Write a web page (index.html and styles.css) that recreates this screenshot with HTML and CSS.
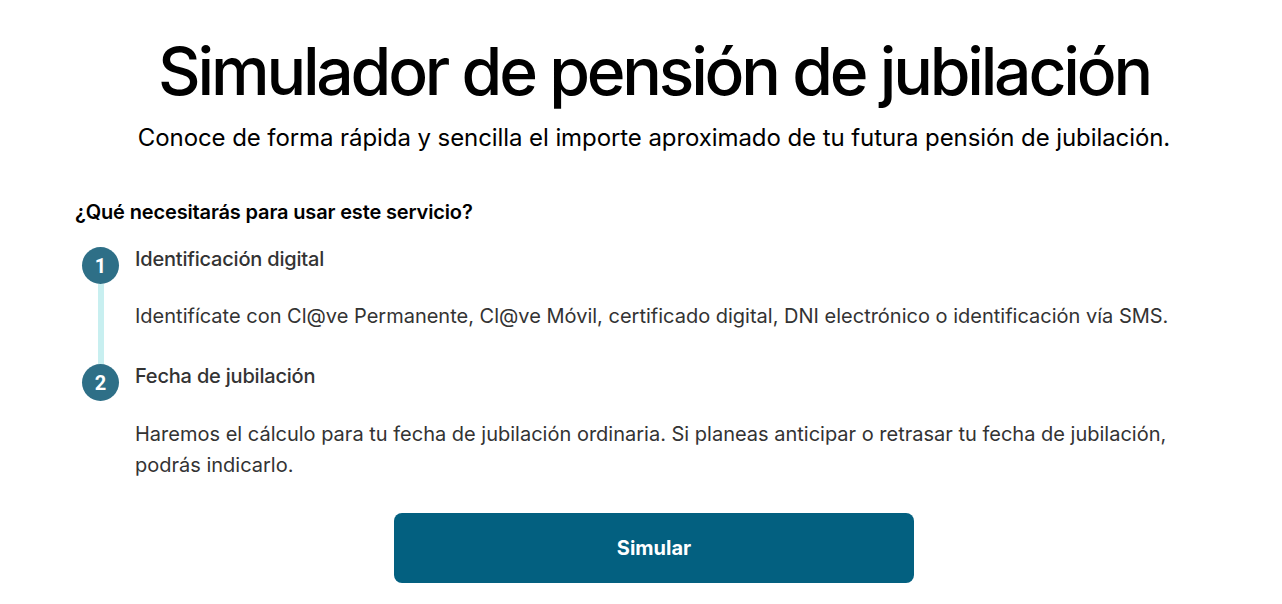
FILE: index.html
```html
<!DOCTYPE html>
<html lang="es">
<head>
<meta charset="utf-8">
<title>Simulador de pensión de jubilación</title>
<link rel="stylesheet" href="styles.css">
</head>
<body>
<main class="page">
  <header class="hero">
    <h1 class="hero-title">Simulador de pensión de jubilación</h1>
    <p class="hero-sub">Conoce de forma rápida y sencilla el importe aproximado de tu futura pensión de jubilación.</p>
  </header>
  <section class="needs">
    <h2 class="needs-title">¿Qué necesitarás para usar este servicio?</h2>
    <ol class="steps">
      <li class="step">
        <div class="step-rail">
          <span class="step-num">1</span>
          <span class="step-line"></span>
        </div>
        <div class="step-body">
          <h3 class="step-title">Identificación digital</h3>
          <p class="step-text">Identifícate con Cl@ve Permanente, Cl@ve Móvil, certificado digital, DNI electrónico o identificación vía SMS.</p>
        </div>
      </li>
      <li class="step step-last">
        <div class="step-rail">
          <span class="step-num">2</span>
        </div>
        <div class="step-body">
          <h3 class="step-title">Fecha de jubilación</h3>
          <p class="step-text">Haremos el cálculo para tu fecha de jubilación ordinaria. Si planeas anticipar o retrasar tu fecha de jubilación, podrás indicarlo.</p>
        </div>
      </li>
    </ol>
  </section>
  <div class="actions">
    <button class="btn-primary" type="button">Simular</button>
  </div>
</main>
</body>
</html>
```
FILE: styles.css
```css
* { box-sizing: border-box; }
html, body { margin: 0; padding: 0; background: #fff; }
body {
  font-family: Inter, "Noto Sans", sans-serif;
  color: #000;
}
.page {
  width: 1158px;
  margin-left: 75px;
  padding-top: 31px;
}
.hero { text-align: center; }
.hero-title {
  margin: 0;
  font-size: 66px;
  font-weight: 500;
  line-height: 80px;
  letter-spacing: -3.2px;
}
.hero-sub {
  margin: 12px 0 0;
  font-size: 24px;
  line-height: 30px;
  letter-spacing: -0.08px;
}
.needs { margin-top: 45px; }
.needs-title {
  margin: 0;
  font-size: 20px;
  font-weight: 600;
  line-height: 28px;
  letter-spacing: -0.15px;
  color: #000;
}
.steps {
  list-style: none;
  margin: 18px 0 0;
  padding: 0 0 0 7px;
}
.step {
  display: flex;
  gap: 16px;
}
.step-rail {
  width: 37px;
  display: flex;
  flex-direction: column;
  align-items: center;
  padding-top: 3px;
}
.step-num {
  width: 37px;
  height: 37px;
  flex: none;
  border-radius: 50%;
  background: #2e6f87;
  color: #fff;
  font-family: Roboto, Inter, sans-serif;
  font-weight: 700;
  font-size: 20px;
  display: flex;
  align-items: center;
  justify-content: center;
}
.step-line {
  flex: 1;
  width: 6px;
  margin-bottom: -3px;
  background: #c8eff0;
}
.step-body { flex: 1; }
.step-title {
  margin: 0;
  font-size: 20px;
  font-weight: 500;
  line-height: 30px;
  letter-spacing: -0.2px;
  color: #333;
}
.step-text {
  margin: 27px 0 0;
  font-size: 20px;
  line-height: 31px;
  color: #333;
  padding-bottom: 29px;
}
.step-last .step-text { padding-bottom: 0; margin-top: 28px; }
.actions {
  display: flex;
  justify-content: center;
  margin-top: 32px;
}
.btn-primary {
  width: 520px;
  height: 70px;
  border: 0;
  border-radius: 8px;
  background: #036080;
  color: #fff;
  font-family: Inter, sans-serif;
  font-weight: 700;
  font-size: 20px;
  cursor: pointer;
}
```
